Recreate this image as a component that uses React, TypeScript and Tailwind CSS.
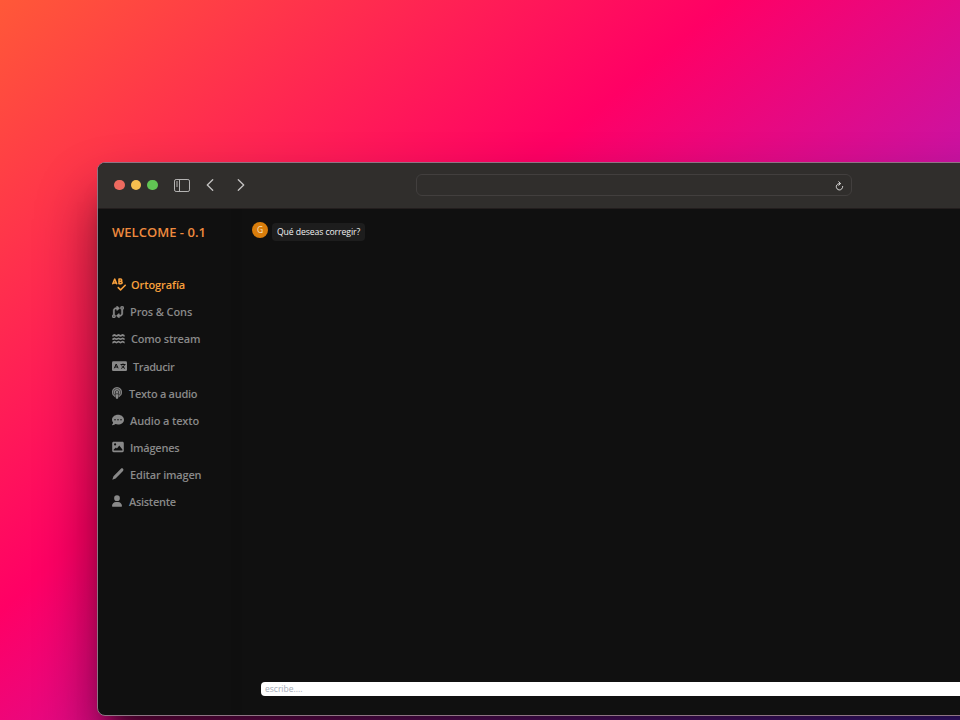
import type { ComponentType } from "react";
import { FaSpellCheck, FaCodeCompare, FaPodcast, FaCommentDots, FaUser } from "react-icons/fa6";

type IconProps = { className?: string };

function Waves({ className }: IconProps) {
  return (
    <svg className={className} viewBox="0 0 14 12" fill="none" stroke="currentColor" strokeWidth="1.9" strokeLinejoin="round">
      <path d="M.4 2.6c1.6 0 1.6-1 2.2-1s.9 1 2.2 1 1.6-1 2.2-1 .9 1 2.2 1 1.6-1 2.2-1 .9 1 2.2 1M.4 6.2c1.6 0 1.6-1 2.2-1s.9 1 2.2 1 1.6-1 2.2-1 .9 1 2.2 1 1.6-1 2.2-1 .9 1 2.2 1M.4 9.8c1.6 0 1.6-1 2.2-1s.9 1 2.2 1 1.6-1 2.2-1 .9 1 2.2 1 1.6-1 2.2-1 .9 1 2.2 1" />
    </svg>
  );
}

function Translate({ className }: IconProps) {
  return (
    <svg className={className} viewBox="0 0 15 12">
      <rect x="0" y="1.2" width="15" height="9.8" rx="1.3" fill="currentColor" />
      <path d="M2.3 8.3 4.2 4l1.9 4.300M3 7h2.400M8.500 4.500h5M11 3.500v1M12.500 4.700c-.5 1.700-1.700 3-3.300 3.700M9.700 5.500c.6 1.300 1.700 2.300 3.300 2.900" fill="none" stroke="#101010" strokeWidth="1" />
    </svg>
  );
}

function Picture({ className }: IconProps) {
  return (
    <svg className={className} viewBox="0 0 12 12" fill="currentColor" fillRule="evenodd">
      <path d="M1.6.8h8.8c.8 0 1.4.6 1.4 1.4v7.6c0 .8-.6 1.4-1.4 1.4H1.6C.8 11.2.2 10.6.2 9.8V2.2C.2 1.4.8.8 1.6.8ZM3.1 2.3a1.1 1.1 0 1 0 0 2.2 1.1 1.1 0 0 0 0-2.2ZM1.7 9.4h8.7V8.5L7.3 4.5 4.9 7.5 3.9 6.5 1.7 8.6Z" />
    </svg>
  );
}

function Pencil({ className }: IconProps) {
  return (
    <svg className={className} viewBox="0 0 12 12" fill="currentColor">
      <path d="M8.9.8c.6-.6 1.5-.6 2.1 0s.6 1.5 0 2.1L3.6 10.4.3 11.7 1.5 8.3Z" />
    </svg>
  );
}

type Item = {
  label: string;
  icon: ComponentType<IconProps>;
  iconClass: string;
  textClass: string;
  active?: boolean;
};

const items: Item[] = [
  { label: "Ortografía", icon: FaSpellCheck, iconClass: "w-[14px] h-[13px]", textClass: "ml-[5px] tracking-[-0.1px]", active: true },
  { label: "Pros & Cons", icon: FaCodeCompare, iconClass: "w-[12px] h-[12px] stroke-current stroke-[14px]", textClass: "ml-[6px] tracking-[-0.12px]" },
  { label: "Como stream", icon: Waves, iconClass: "w-[13px] h-[12px]", textClass: "ml-[6px] tracking-[-0.2px]" },
  { label: "Traducir", icon: Translate, iconClass: "w-[15px] h-[12px]", textClass: "ml-[6px] tracking-[-0.4px]" },
  { label: "Texto a audio", icon: FaPodcast, iconClass: "w-[10px] h-[12px] stroke-current stroke-[14px]", textClass: "ml-[7px] tracking-[-0.27px]" },
  { label: "Audio a texto", icon: FaCommentDots, iconClass: "w-[12px] h-[12px]", textClass: "ml-[6px] tracking-[-0.13px]" },
  { label: "Imágenes", icon: Picture, iconClass: "w-[12px] h-[12px]", textClass: "ml-[6px] tracking-[-0.25px]" },
  { label: "Editar imagen", icon: Pencil, iconClass: "w-[12px] h-[12px]", textClass: "ml-[6px] tracking-[-0.18px]" },
  { label: "Asistente", icon: FaUser, iconClass: "w-[10px] h-[12px]", textClass: "ml-[7px] tracking-[-0.3px]" },
];

function TitleBar() {
  return (
    <div className="flex h-[46px] shrink-0 items-center border-b border-[#231e1e] bg-[#302e2c] pl-[16.5px]">
      <div className="flex gap-[6px]">
        <span className="size-[10.5px] rounded-full bg-[#ed6a5f]" />
        <span className="size-[10.5px] rounded-full bg-[#f5bf4f]" />
        <span className="size-[10.5px] rounded-full bg-[#61c554]" />
      </div>
      <svg className="ml-[16.5px] h-[13px] w-[16px]" viewBox="0 0 16 13" fill="none" stroke="#b5b4b3" strokeWidth="1">
        <rect x="0.5" y="0.5" width="15" height="12" rx="1.6" />
        <path d="M5.5 .5v12M2 3h2M2 5h2M2 7h2" />
      </svg>
      <svg className="ml-[16px] h-[12px] w-[8px]" viewBox="0 0 8 12" fill="none" stroke="#c4c3c2" strokeWidth="1.3" strokeLinecap="round" strokeLinejoin="round">
        <path d="M6.7 .8 1.3 6l5.4 5.2" />
      </svg>
      <svg className="ml-[23px] h-[12px] w-[8px]" viewBox="0 0 8 12" fill="none" stroke="#c4c3c2" strokeWidth="1.3" strokeLinecap="round" strokeLinejoin="round">
        <path d="M1.3 .8 6.7 6l-5.4 5.2" />
      </svg>
      <div className="ml-[170.5px] flex h-[22px] w-[436px] items-center justify-end rounded-[6px] border border-[#423f3e] pr-[7px]">
        <svg className="mt-[1px] h-[10px] w-[9px]" viewBox="0 0 9 10" fill="none" stroke="#dddcdb" strokeWidth="1" strokeLinecap="round">
          <path d="M5.2 2.6A3.2 3.2 0 1 0 7.7 5.5M3.8.7l1.7 1.8-1.7 1.8" />
        </svg>
      </div>
    </div>
  );
}

function Sidebar() {
  return (
    <aside className="w-[133px] shrink-0 pl-[14.5px] pt-[13.5px]">
      <h1 className="h-[20px] whitespace-nowrap text-[13px] leading-[20px] font-semibold tracking-[0.02px] text-[#ee8a3e]">
        WELCOME - 0.1
      </h1>
      <nav className="mt-[30px] flex flex-col">
        {items.map(({ label, icon: Icon, iconClass, textClass, active }) => (
          <a key={label} className={`flex h-[27.1px] items-center whitespace-nowrap ${active ? "text-[#f9a03c]" : "text-[#898989]"}`}>
            <Icon className={`${iconClass} mb-[2px] shrink-0`} />
            <span className={`${textClass} shrink-0 text-[11px] font-semibold`}>{label}</span>
          </a>
        ))}
      </nav>
    </aside>
  );
}

export default function App() {
  return (
    <div className="h-[720px] w-[960px] overflow-hidden bg-[linear-gradient(140deg,#ff6432_-62px,#ff0065_468px,#7b2eff_1152px)] pl-[96.5px] pt-[161.5px] font-['Open_Sans','Noto_Sans',sans-serif]">
      <div className="flex h-[554.5px] w-[1100px] flex-col overflow-hidden rounded-[8px] border border-[#8f7484] bg-[#101010] shadow-[0_36px_60px_rgba(0,0,0,0.48),0_24px_24px_-16px_rgba(0,0,0,0.68)]">
        <TitleBar />
        <div className="flex flex-1">
          <Sidebar />
          <div className="w-[11px] shrink-0 bg-[#0f0f0f]" />
          <main className="flex flex-1 flex-col justify-between pb-[19px] pl-[10.5px] pt-[13.5px]">
            <div className="flex">
              <div className="flex size-[16px] items-center justify-center rounded-full bg-[#d97d0b] text-[8.5px] text-[#f7e3c3]">G</div>
              <div className="ml-[4px] mt-[1px] flex h-[18px] w-[93px] items-center justify-center whitespace-nowrap rounded-[4px] bg-[#1d1d1d] pt-px text-[8.7px] tracking-[-0.1px] text-[#f0f0f0]">
                Qué deseas corregir?
              </div>
            </div>
            <div className="ml-[9px] flex h-[14px] w-[840px] items-center rounded-[4px] bg-white pl-[4px] text-[8.5px] text-[#a5abb7]">
              escribe....
            </div>
          </main>
        </div>
      </div>
    </div>
  );
}
